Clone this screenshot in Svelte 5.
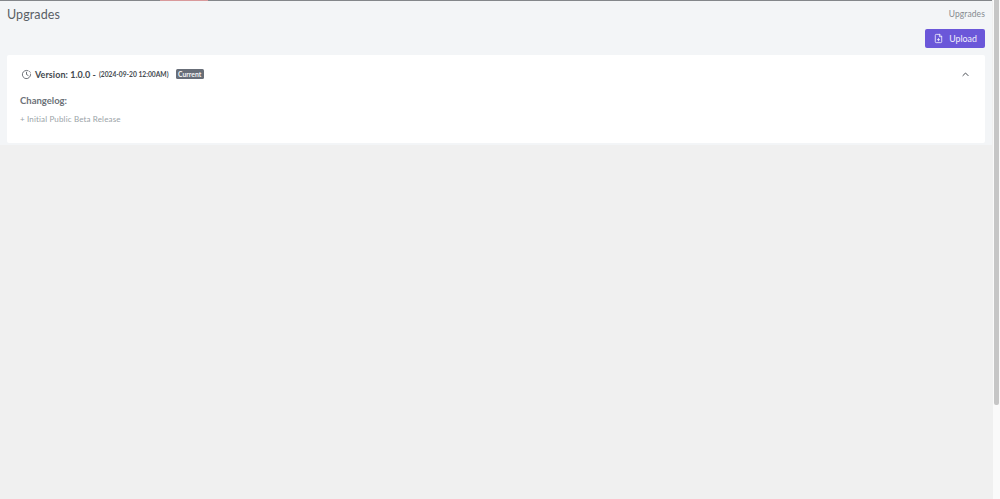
<script>
  let version = "1.0.0";
  let released = "(2024-09-20 12:00AM)";
</script>

<div class="window">
  <div class="page">
    <div class="loader"><div class="loader-bar"></div></div>
    <div class="content">
      <div class="header">
        <div class="title">Upgrades</div>
        <div class="crumb">Upgrades</div>
      </div>
      <div class="actions">
        <button class="upload">
          <svg viewBox="0 0 24 24" fill="none" stroke="currentColor" stroke-width="1.8" stroke-linecap="round" stroke-linejoin="round">
            <path d="M14 3H7a2 2 0 0 0-2 2v14a2 2 0 0 0 2 2h10a2 2 0 0 0 2-2V8z" />
            <path d="M14 3v5h5" />
            <path d="M12 17v-5M9.5 14.5h5" />
          </svg>
          Upload
        </button>
      </div>
      <div class="card">
        <div class="card-head">
          <svg class="clock" viewBox="0 0 24 24" fill="none" stroke="currentColor" stroke-width="1.9" stroke-linecap="round" stroke-linejoin="round">
            <path d="M21 12a9 9 0 1 1-5.5-8.3" />
            <path d="M12 7v5l3.5 2" />
            <path d="M18.7 5.5v.01M20.6 8.5v.01" />
          </svg>
          <span class="version">Version: {version} -</span>
          <span class="date">{released}</span>
          <span class="badge">Current</span>
          <svg class="chevron" viewBox="0 0 12 12" fill="none" stroke="currentColor" stroke-width="1.3" stroke-linecap="round" stroke-linejoin="round">
            <path d="M2.5 7.5 6 4l3.5 3.5" />
          </svg>
        </div>
        <div class="changelog">Changelog:</div>
        <div class="entry">+ Initial Public Beta Release</div>
      </div>
    </div>
  </div>
  <div class="scrollbar"><div class="thumb"></div></div>
</div>

<style>
  :global(body) {
    margin: 0;
    overflow: hidden;
    font-family: Lato, "Open Sans", sans-serif;
  }
  .window {
    display: flex;
    height: 499px;
    background-color: #f0f0f0;
  }
  .page {
    flex-grow: 1;
    min-width: 0;
  }
  .loader {
    height: 1px;
    background-color: #84878b;
    padding-left: 160px;
  }
  .loader-bar {
    width: 48px;
    height: 1px;
    background-color: #d99a9c;
  }
  .content {
    height: 144px;
    padding: 0 7px;
    background-color: #f3f5f7;
  }
  .header {
    display: flex;
    justify-content: space-between;
    align-items: center;
    padding-top: 4px;
    height: 19px;
  }
  .title {
    font-size: 12.5px;
    font-weight: 400;
    color: #5a5f66;
    letter-spacing: 0.1px;
    margin-top: -1px;
  }
  .crumb {
    font-size: 8.5px;
    color: #868b90;
    letter-spacing: 0.1px;
    margin-top: -1px;
  }
  .actions {
    display: flex;
    justify-content: flex-end;
    margin-top: 5px;
  }
  .upload {
    display: flex;
    align-items: center;
    justify-content: center;
    gap: 5px;
    width: 60px;
    height: 19px;
    padding: 0;
    border: none;
    border-radius: 2px;
    background-color: #6b57d9;
    color: #f1effc;
    font-family: inherit;
    font-size: 8.8px;
  }
  .upload svg {
    width: 11px;
    height: 11px;
  }
  .card {
    margin-top: 7px;
    height: 88px;
    background-color: #ffffff;
    border-radius: 2px;
    padding: 0 13px;
    color: #4d5259;
  }
  .card-head {
    display: flex;
    align-items: center;
    height: 38px;
  }
  .clock {
    width: 11px;
    height: 11px;
    margin-left: 1px;
    margin-right: 3px;
    color: #5a5f66;
  }
  .version {
    font-size: 9px;
    font-weight: 700;
    color: #44494f;
    letter-spacing: 0.05px;
  }
  .date {
    margin-left: 3px;
    font-size: 6.7px;
    font-weight: 700;
    color: #44494f;
  }
  .badge {
    margin-left: 7px;
    padding: 0 2.5px;
    height: 10px;
    line-height: 10px;
    border-radius: 1.5px;
    background-color: #686e78;
    color: #f4f5f6;
    font-size: 6.8px;
    font-weight: 700;
  }
  .chevron {
    width: 9px;
    height: 9px;
    margin-left: auto;
    margin-right: 2px;
    color: #44494f;
  }
  .changelog {
    margin-top: 1px;
    font-size: 9.5px;
    font-weight: 700;
    color: #6d7279;
    line-height: 14px;
  }
  .entry {
    margin-top: 5px;
    font-size: 8px;
    color: #9aa3a8;
    letter-spacing: 0.15px;
    line-height: 12px;
  }
  .scrollbar {
    flex: none;
    width: 8px;
    background-color: #fafafa;
    border-left: 1px solid #f0f0f0;
    box-sizing: border-box;
  }
  .thumb {
    height: 405px;
    width: 5px;
    margin-left: 1px;
    border-radius: 0 0 2px 2px;
    background-color: #c6c6c6;
  }
</style>
